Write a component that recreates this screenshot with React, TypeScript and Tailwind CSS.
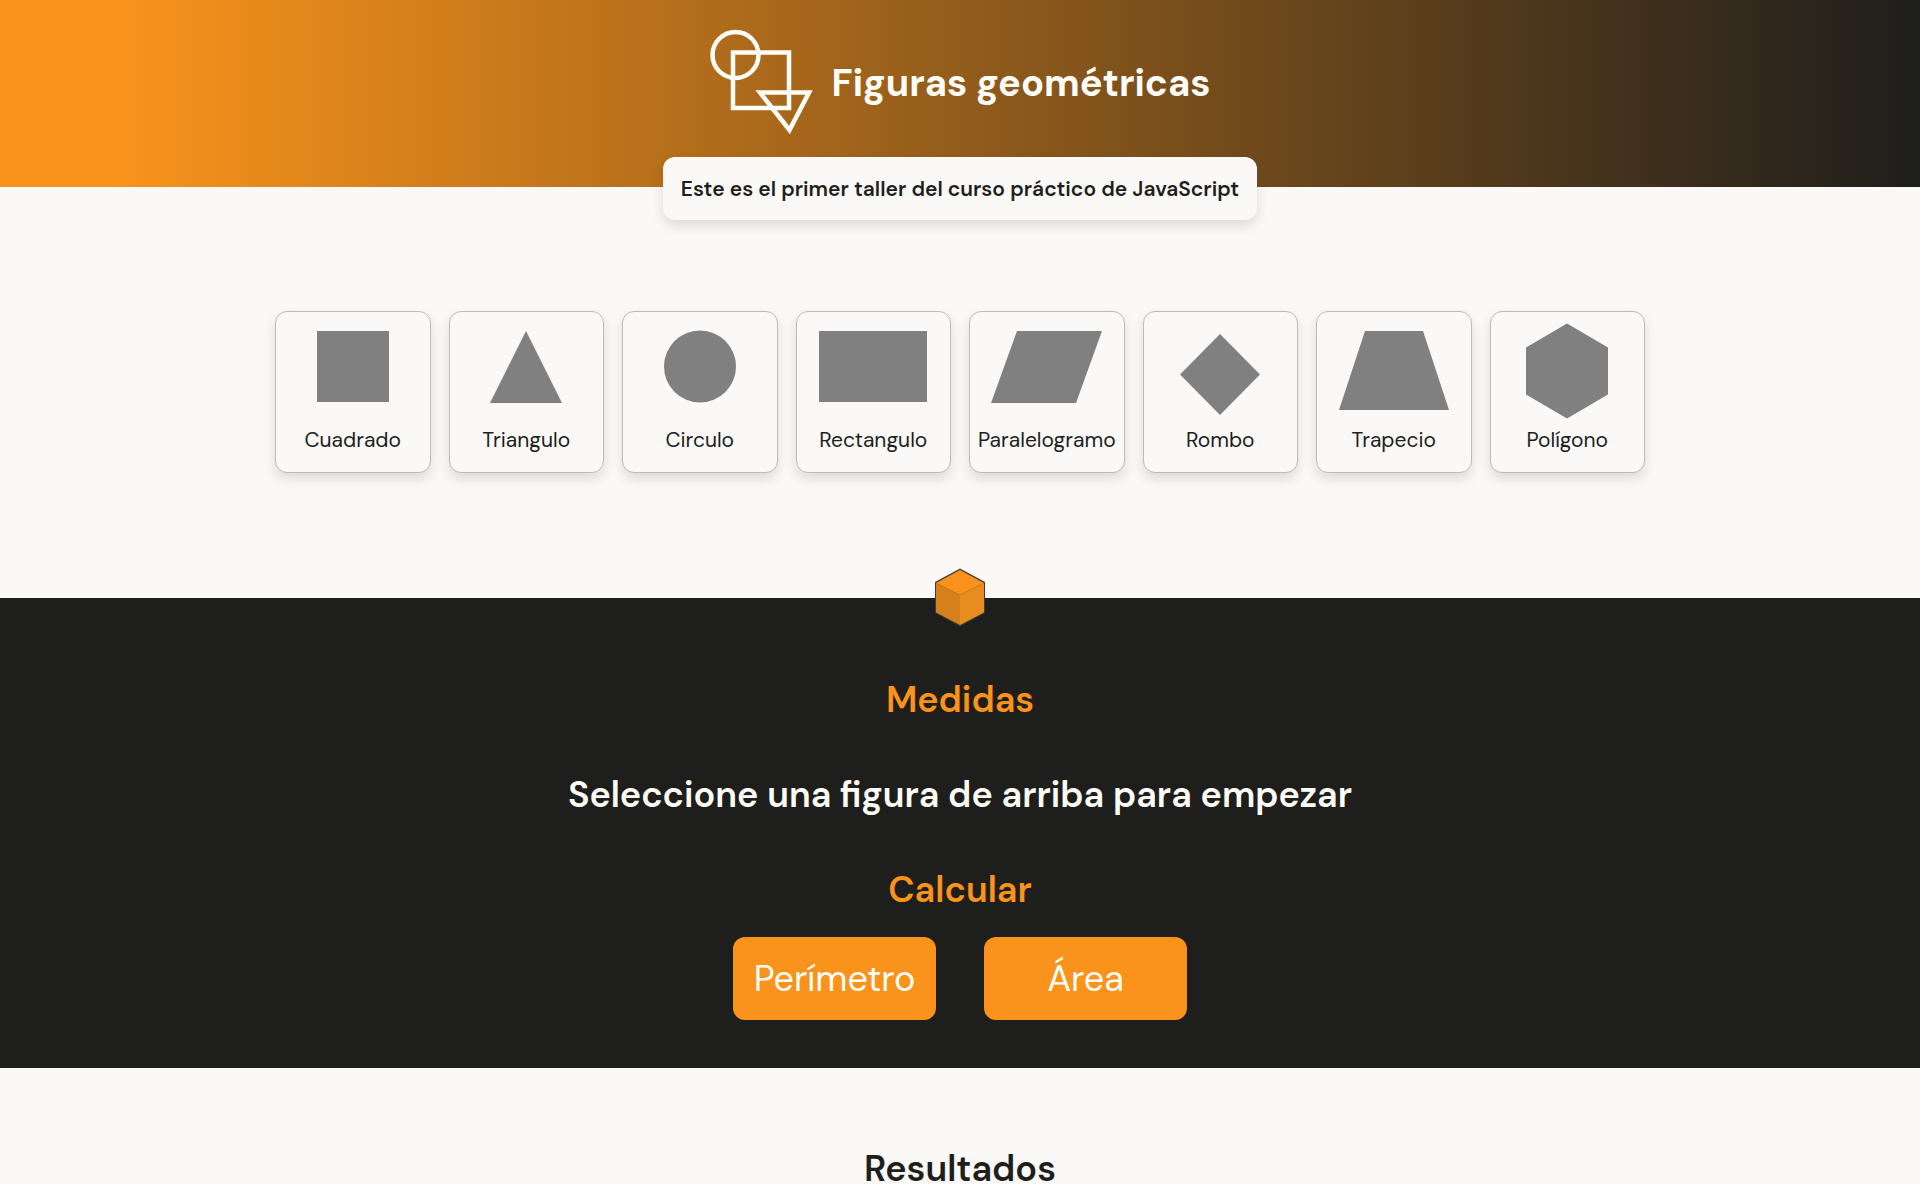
import { useState } from "react";
import type { ReactNode } from "react";

type Figure = { name: string; shape: ReactNode };

const figures: Figure[] = [
  { name: "Cuadrado", shape: <rect x="20" y="8" width="72" height="71" /> },
  { name: "Triangulo", shape: <polygon points="56,8 92,80 20,80" /> },
  { name: "Circulo", shape: <circle cx="56" cy="43.5" r="36" /> },
  { name: "Rectangulo", shape: <rect x="2" y="8" width="108" height="71" /> },
  { name: "Paralelogramo", shape: <polygon points="26,8 111,8 85,80 0,80" /> },
  { name: "Rombo", shape: <polygon points="56,11 96,51.5 56,92 16,51.5" /> },
  { name: "Trapecio", shape: <polygon points="27,8 85,8 111,87 1,87" /> },
  { name: "Polígono", shape: <polygon points="56,0.5 97,24.5 97,71.5 56,95.5 15,71.5 15,24.5" /> },
];

function Logo() {
  return (
    <svg className="h-[106px] w-[104px]" viewBox="0 0 104 106" fill="none" stroke="#fffdf8" strokeWidth="4.5" aria-hidden="true">
      <circle cx="25.5" cy="26" r="23" />
      <rect x="23" y="23.5" width="56" height="55.5" />
      <polygon points="50,63.5 99,63.5 79.5,101" />
    </svg>
  );
}

function Cube() {
  return (
    <svg className="h-[59px] w-[52px]" viewBox="0 0 52 59" aria-hidden="true">
      <polygon points="26,0.5 51,14 51,45 26,58.5 1,45 1,14" fill="#3f3a33" />
      <polygon points="26,2 50,15 26,27 2,15" fill="#f8921a" />
      <polygon points="2,15 26,27 26,57 2,44.5" fill="#d5801b" />
      <polygon points="50,15 26,27 26,57 50,44.5" fill="#e88c1e" />
    </svg>
  );
}

export default function App() {
  const [selected, setSelected] = useState<string | null>(null);

  return (
    <div className="bg-[#faf9f7] font-['DM_Sans','Inter',sans-serif] text-[#1e1e1c]">
      <header className="flex items-center justify-center gap-[18px] bg-linear-to-r/srgb from-[#f9931b] from-6% to-[#1e1e1c] pt-[29px] pb-[52px]">
        <Logo />
        <h1 className="pt-0.5 text-[38px] leading-none font-bold text-[#fffdf8]">Figuras geométricas</h1>
      </header>

      <main>
        <section className="flex flex-col items-center px-4 pb-[125px]">
          <p className="-mt-[30px] rounded-xl bg-[#faf9f7] px-[18px] pt-[17px] pb-[15px] text-[21px] leading-[31px] font-semibold shadow-[0_6px_12px_rgba(60,50,30,0.14)]">
            Este es el primer taller del curso práctico de JavaScript
          </p>

          <div className="mt-[91px] grid w-full max-w-[1370px] grid-cols-8 gap-[18px]">
            {figures.map(({ name, shape }) => (
              <button
                key={name}
                type="button"
                aria-pressed={selected === name}
                onClick={() => setSelected(name)}
                className="flex flex-col items-center gap-1.5 rounded-xl border border-[#bdbbb8] bg-[#faf9f7] pt-[11px] pb-[17px] text-[21px] leading-[30px] shadow-[0_6px_12px_rgba(60,50,30,0.14)]"
              >
                <svg className="h-24 w-28" viewBox="0 0 112 96" fill="#808080" aria-hidden="true">
                  {shape}
                </svg>
                <span>{name}</span>
              </button>
            ))}
          </div>
        </section>

        <section className="flex flex-col items-center bg-[#1e1e1c] pb-12">
          <div className="-mt-[30px]">
            <Cube />
          </div>
          <h2 className="mt-[49px] text-[36px] leading-12 font-semibold text-[#f9931b]">Medidas</h2>
          <p className="mt-[47px] text-[36px] leading-12 font-semibold text-[#fffdf8]">
            Seleccione una figura de arriba para empezar
          </p>
          <h2 className="mt-[47px] text-[36px] leading-12 font-semibold text-[#f9931b]">Calcular</h2>
          <div className="mt-[23px] flex gap-12 text-[36px] leading-[47px] text-[#fffdf8]">
            <button type="button" className="w-[203px] rounded-xl bg-[#f9931b] py-[18px]">
              Perímetro
            </button>
            <button type="button" className="w-[203px] rounded-xl bg-[#f9931b] py-[18px]">
              Área
            </button>
          </div>
        </section>

        <section className="pt-[85px] text-center">
          <h2 className="text-[36px] leading-8 font-semibold">Resultados</h2>
        </section>
      </main>
    </div>
  );
}
